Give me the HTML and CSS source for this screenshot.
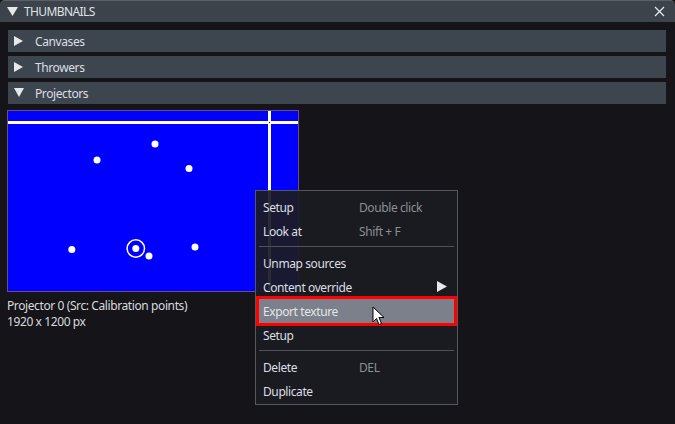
FILE: index.html
```html
<!DOCTYPE html>
<html>
<head>
<meta charset="utf-8">
<link rel="stylesheet" href="styles.css">
</head>
<body>
<div class="window">
  <div class="titlebar">
    <svg class="tri-down title-tri" width="11" height="9" viewBox="0 0 11 9"><polygon points="0,0 11,0 5.5,9" fill="#e6e8ec"/></svg>
    <span class="title">THUMBNAILS</span>
    <svg class="close" width="11" height="11" viewBox="0 0 11 11"><path d="M1 1 L10 10 M10 1 L1 10" stroke="#e8eaee" stroke-width="1.2"/></svg>
  </div>
  <div class="content">
    <div class="header">
      <svg class="htri" width="10" height="10" viewBox="0 0 10 10"><polygon points="0,0 9,5 0,10" fill="#e6e8ec"/></svg>
      <span>Canvases</span>
    </div>
    <div class="header">
      <svg class="htri" width="10" height="10" viewBox="0 0 10 10"><polygon points="0,0 9,5 0,10" fill="#e6e8ec"/></svg>
      <span>Throwers</span>
    </div>
    <div class="header">
      <svg class="htri" width="10" height="10" viewBox="0 0 10 10"><polygon points="0,0 10,0 5,9" fill="#e6e8ec"/></svg>
      <span>Projectors</span>
    </div>
    <div class="thumb">
      <svg width="290" height="180" viewBox="0 0 290 180">
        <rect x="0" y="0" width="290" height="180" fill="#0000ff"/>
        <rect x="0" y="10" width="290" height="3" fill="#fff"/>
        <rect x="260" y="0" width="3" height="180" fill="#fff"/>
        <rect x="261" y="11" width="1" height="1" fill="#0000ff"/>
        <g fill="#fff">
          <circle cx="89" cy="49" r="3.5"/>
          <circle cx="147" cy="33" r="3.5"/>
          <circle cx="181" cy="57.5" r="3.5"/>
          <circle cx="63.8" cy="138.5" r="3.5"/>
          <circle cx="127.8" cy="137.5" r="3.5"/>
          <circle cx="141" cy="145" r="3.5"/>
          <circle cx="187" cy="136" r="3.5"/>
        </g>
        <circle cx="127.8" cy="137.5" r="8.7" fill="none" stroke="#fff" stroke-width="1.5"/>
      </svg>
    </div>
    <div class="caption">
      <div>Projector 0 (Src: Calibration points)</div>
      <div>1920 x 1200 px</div>
    </div>
  </div>
  <div class="menu">
    <div class="item"><span class="label">Setup</span><span class="key">Double click</span></div>
    <div class="item"><span class="label">Look at</span><span class="key">Shift + F</span></div>
    <div class="sep"></div>
    <div class="item"><span class="label">Unmap sources</span></div>
    <div class="item"><span class="label">Content override</span>
      <svg class="sub" width="10" height="11" viewBox="0 0 10 11"><polygon points="0,0 10,5.5 0,11" fill="#e6e8ec"/></svg>
    </div>
    <div class="item active"><span class="label">Export texture</span></div>
    <div class="item"><span class="label">Setup</span></div>
    <div class="sep"></div>
    <div class="item"><span class="label">Delete</span><span class="key">DEL</span></div>
    <div class="item"><span class="label">Duplicate</span></div>
  </div>
  <svg class="cursor" width="14" height="20" viewBox="0 0 14 20">
    <path d="M1 1 L1 16 L4.5 12.5 L7 18.5 L9.5 17.5 L7 11.5 L12 11.5 Z" fill="#fff" stroke="#000" stroke-width="1" stroke-linejoin="miter"/>
  </svg>
</div>
</body>
</html>
```

FILE: styles.css
```css
* { box-sizing: border-box; }
html, body { margin: 0; padding: 0; }
body {
  background: #151519;
  font-family: "Noto Sans", "DejaVu Sans", sans-serif;
  font-size: 12px;
  letter-spacing: -0.4px;
  color: #dcdee3;
  width: 675px;
  height: 424px;
  overflow: hidden;
}
.window {
  position: relative;
  width: 675px;
  height: 424px;
  background: #151519;
}
.titlebar {
  height: 22px;
  background: #3c434b;
  border-top: 1px solid #5b6068;
  border-radius: 5px 5px 0 0;
  display: flex;
  align-items: center;
  padding-left: 7px;
  padding-right: 10px;
}
.title {
  margin-left: 6px;
  color: #dfe2e6;
  letter-spacing: -0.6px;
}
.close { margin-left: auto; }
.content {
  padding: 8px 9px 0 8px;
  display: flex;
  flex-direction: column;
}
.header {
  height: 22px;
  background: #3d454e;
  display: flex;
  align-items: center;
  padding-left: 6px;
  margin-bottom: 4px;
}
.header span { margin-left: 11px; }
.thumb {
  margin-top: 2px;
  margin-left: -1px;
  width: 292px;
  height: 182px;
  border: 1px solid #6c4c84;
}
.thumb svg { display: block; }
.caption {
  margin-left: -1px;
  margin-top: 6px;
  line-height: 16px;
  color: #d8dade;
}
.menu {
  position: absolute;
  left: 255px;
  top: 190px;
  width: 203px;
  height: 215px;
  background: rgba(27, 28, 34, 0.93);
  border: 1px solid #54575d;
  padding-top: 4px;
}
.item {
  height: 24px;
  display: flex;
  align-items: center;
  padding-left: 7px;
  position: relative;
}
.label { width: 96px; color: #dcdee3; }
.key { color: #8c8f95; }
.sub { position: absolute; left: 181px; top: 6px; }
.item.active {
  background: #7b808a;
  outline: 3px solid #ff0000;
  margin: 0 3px;
  padding-left: 4px;
}
.item.active .label { color: #e4e6ea; }
.sep {
  height: 1px;
  background: #4e5157;
  margin: 3px 3px 4px 3px;
}
.cursor {
  position: absolute;
  left: 372px;
  top: 306px;
}
```
